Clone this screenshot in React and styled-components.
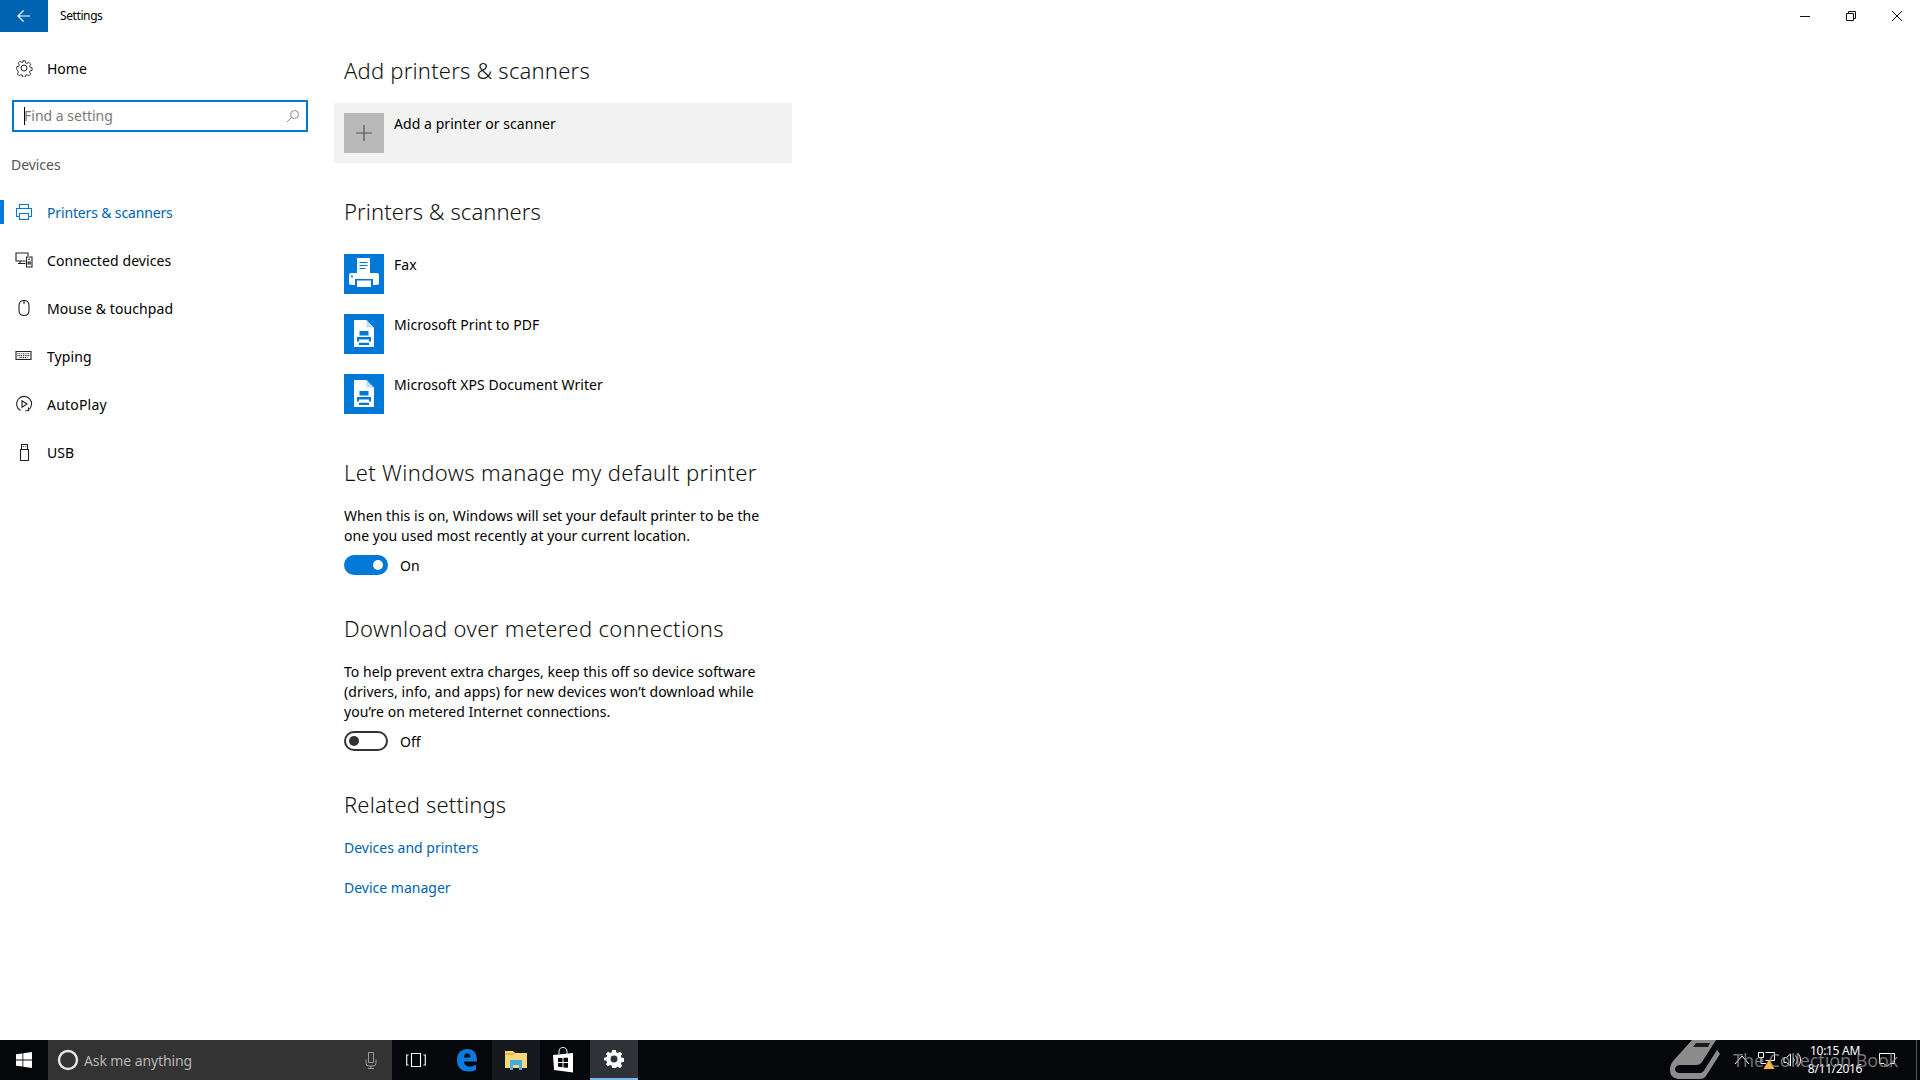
import React from "react";
import styled, { createGlobalStyle } from "styled-components";

const GlobalStyle = createGlobalStyle`
  html, body {
    margin: 0;
    padding: 0;
    height: 100%;
    background: #fff;
    overflow: hidden;
  }
  body {
    font-family: "Noto Sans", "Open Sans", sans-serif;
    color: #000;
  }
  * { box-sizing: border-box; }
`;

const navItems = [
  { label: "Printers & scanners", icon: <PrinterIcon />, active: true, track: -0.15 },
  { label: "Connected devices", icon: <DevicesIcon />, track: 0.1 },
  { label: "Mouse & touchpad", icon: <MouseIcon />, track: 0.1 },
  { label: "Typing", icon: <KeyboardIcon />, track: 0.1 },
  { label: "AutoPlay", icon: <AutoPlayIcon />, track: 0.2 },
  { label: "USB", icon: <UsbIcon />, track: 0 },
];

function PrinterIcon() {
  return (
    <svg width="18" height="18" viewBox="0 0 18 18" fill="none" stroke="currentColor" strokeWidth="1.1">
      <path d="M4.5 5.5V1.5h9v4M4.5 13.5H1.5v-8h15v8h-3M4.5 10.5h9v6h-9z" />
    </svg>
  );
}

function DevicesIcon() {
  return (
    <svg width="18" height="18" viewBox="0 0 18 18" fill="none" stroke="currentColor" strokeWidth="1.1">
      <path d="M10.5 10H1V2h12v3M5 10v2.500h5.500M3 12.500h4" />
      <path d="M11.500 6h5.500v10h-5.500z" />
      <path d="M13.200 8.300h2M13.200 11h2v2h-2z" />
    </svg>
  );
}

function MouseIcon() {
  return (
    <svg width="18" height="18" viewBox="0 0 18 18" fill="none" stroke="currentColor" strokeWidth="1.1">
      <path d="M4 6.500C4 3 6 1.500 9 1.500S14 3 14 6.500v5c0 3.500-2 5-5 5s-5-1.500-5-5z" />
      <path d="M9 1.500V5" />
    </svg>
  );
}

function KeyboardIcon() {
  return (
    <svg width="18" height="18" viewBox="0 0 18 18" fill="none" stroke="currentColor" strokeWidth="1.100">
      <path d="M1 4.500h15v8H1z" />
      <path d="M2.500 6.800h12M2.500 8.600h12M4.500 10.600h8" strokeDasharray="1 0.800" />
    </svg>
  );
}

function AutoPlayIcon() {
  return (
    <svg width="18" height="18" viewBox="0 0 18 18" fill="none" stroke="currentColor" strokeWidth="1.100">
      <path d="M5.500 15.500A7.500 7.500 0 1 1 13 15.300" />
      <path d="M13.500 12.500v3.300h-3.300" />
      <path d="M7 5.800l5 3.200-5 3.200z" />
    </svg>
  );
}

function UsbIcon() {
  return (
    <svg width="18" height="18" viewBox="0 0 18 18" fill="none" stroke="currentColor" strokeWidth="1.100">
      <path d="M5.500 6.500h8v11h-8zM6.500 6.500V1.500h6v5" />
      <path d="M8 3.500h.8M10.300 3.500h.8" />
    </svg>
  );
}

function FaxGlyph() {
  return (
    <svg width="40" height="40" viewBox="0 0 40 40">
      <path fill="#fff" d="M13 4h13v17H13z" />
      <path stroke="#0078d7" strokeWidth="1" d="M15.500 8.500h8M15.500 11.500h8M15.500 14.500h6" />
      <path fill="#fff" d="M7 19h26a2 2 0 0 1 2 2v8a2 2 0 0 1-2 2H7a2 2 0 0 1-2-2v-8a2 2 0 0 1 2-2z" />
      <path fill="#0078d7" d="M11 25h18v9H11z" />
      <path fill="#fff" d="M13 26.500h14V33H13z" />
      <circle cx="8" cy="22.500" r="1" fill="#0078d7" />
    </svg>
  );
}

function DocPrintGlyph() {
  return (
    <svg width="40" height="40" viewBox="0 0 40 40">
      <path fill="#fff" d="M10 6h12.500l7.500 7.500V33H10z" />
      <path fill="#0078d7" d="M22.500 6l7.500 7.500h-7.500z" opacity="0.25" />
      <path fill="#0078d7" d="M15.500 17h9v4.500h-9zM13 23h14v4.500H13zM15 28.500h10V31H15z" />
      <path fill="#fff" d="M15 25.500h10v3H15z" />
    </svg>
  );
}

function BackArrow() {
  return (
    <svg width="14" height="14" viewBox="0 0 14 14" fill="none" stroke="#fff" strokeWidth="1.200">
      <path d="M13 7H1M6.500 1.500L1 7l5.500 5.500" />
    </svg>
  );
}

function GearOutline() {
  return (
    <svg width="18" height="18" viewBox="0 0 18 18" fill="none" stroke="#222" strokeWidth="1">
      <circle cx="9" cy="9" r="3" />
      <path d="M7.500 1h3l.4 2.300 1.500.7 2-1.300 2.100 2.100-1.300 2 .7 1.500 2.100.4v3l-2.100.4-.7 1.500 1.300 2-2.100 2.100-2-1.300-1.500.7-.4 2.100h-3l-.4-2.100-1.500-.7-2 1.300-2.100-2.100 1.300-2-.7-1.500L1 10.500v-3l2.100-.4.7-1.500-1.300-2 2.100-2.100 2 1.300 1.500-.7z" transform="translate(0.900 0.900) scale(0.9)" />
    </svg>
  );
}

function SearchGlyph() {
  return (
    <svg width="14" height="14" viewBox="0 0 14 14" fill="none" stroke="#8a8a8a" strokeWidth="1">
      <circle cx="8.500" cy="5.500" r="4" />
      <path d="M5.500 8.500L1 13" />
    </svg>
  );
}

function App() {
  return (
    <>
      <GlobalStyle />
      <Page>
        <TitleBar>
          <BackButton><BackArrow /></BackButton>
          <TitleText>Settings</TitleText>
          <WindowButtons>
            <WindowButton>
              <svg width="12" height="12" viewBox="0 0 12 12" stroke="#111" fill="none"><path d="M1 6.500h10" /></svg>
            </WindowButton>
            <WindowButton>
              <svg width="12" height="12" viewBox="0 0 12 12" stroke="#111" fill="none"><path d="M1.500 3.500h7v7h-7zM3.500 3.500v-2h7v7h-2" /></svg>
            </WindowButton>
            <WindowButton>
              <svg width="12" height="12" viewBox="0 0 12 12" stroke="#111" fill="none"><path d="M1 1l10 10M11 1L1 11" /></svg>
            </WindowButton>
          </WindowButtons>
        </TitleBar>

        <Main>
          <Sidebar>
            <HomeRow>
              <NavIcon><GearOutline /></NavIcon>
              <NavLabel>Home</NavLabel>
            </HomeRow>
            <SearchBox>
              <Caret />
              <SearchPlaceholder>Find a setting</SearchPlaceholder>
              <SearchGlyph />
            </SearchBox>
            <GroupLabel>Devices</GroupLabel>
            <NavList>
              {navItems.map((item) => (
                <NavRow key={item.label} $active={item.active}>
                  <NavIcon>{item.icon}</NavIcon>
                  <NavLabel $track={item.track}>{item.label}</NavLabel>
                </NavRow>
              ))}
            </NavList>
          </Sidebar>

          <Content>
            <Heading $top={22} $track={0.2}>Add printers &amp; scanners</Heading>
            <AddTile>
              <AddSquare>
                <svg width="18" height="18" viewBox="0 0 18 18" stroke="#555" strokeWidth="1.200"><path d="M9 1v16M1 9h16" /></svg>
              </AddSquare>
              <TileText>Add a printer or scanner</TileText>
            </AddTile>

            <Heading $top={32} $track={0.07}>Printers &amp; scanners</Heading>
            <DeviceList>
              <DeviceRow>
                <DeviceSquare><FaxGlyph /></DeviceSquare>
                <TileText>Fax</TileText>
              </DeviceRow>
              <DeviceRow>
                <DeviceSquare><DocPrintGlyph /></DeviceSquare>
                <TileText>Microsoft Print to PDF</TileText>
              </DeviceRow>
              <DeviceRow>
                <DeviceSquare><DocPrintGlyph /></DeviceSquare>
                <TileText>Microsoft XPS Document Writer</TileText>
              </DeviceRow>
            </DeviceList>

            <Heading $top={42} $track={0.36}>Let Windows manage my default printer</Heading>
            <Paragraph>
              When this is on, Windows will set your default printer to be the<br />
              one you used most recently at your current location.
            </Paragraph>
            <ToggleRow>
              <Toggle $on><Knob $on /></Toggle>
              <ToggleText>On</ToggleText>
            </ToggleRow>

            <Heading $top={37} $track={0.37}>Download over metered connections</Heading>
            <Paragraph>
              To help prevent extra charges, keep this off so device software<br />
              (drivers, info, and apps) for new devices won’t download while<br />
              you’re on metered Internet connections.
            </Paragraph>
            <ToggleRow>
              <Toggle><Knob /></Toggle>
              <ToggleText>Off</ToggleText>
            </ToggleRow>

            <Heading $top={37} $track={0.15}>Related settings</Heading>
            <LinkText $top={18}>Devices and printers</LinkText>
            <LinkText $top={20}>Device manager</LinkText>
          </Content>
        </Main>

        <Taskbar>
          <StartButton>
            <svg width="16" height="16" viewBox="0 0 16 16" fill="#fff">
              <path d="M0 2.300l6.500-.9v6.200H0zM7.300 1.300L16 0v7.600H7.300zM0 8.400h6.500v6.200L0 13.700zM7.300 8.400H16V16l-8.700-1.300z" />
            </svg>
          </StartButton>
          <AskBox>
            <svg width="22" height="22" viewBox="0 0 22 22" fill="none" stroke="#e6e6e6" strokeWidth="2.400">
              <circle cx="11" cy="11" r="9" />
            </svg>
            <AskText>Ask me anything</AskText>
            <svg width="14" height="18" viewBox="0 0 14 18" fill="none" stroke="#9a9a9a" strokeWidth="1">
              <path d="M4.500 1.500h5v10h-5zM2 8.500v3.500a3 3 0 0 0 3 3h4a3 3 0 0 0 3-3V8.500M7 15v2.500M4 17.500h6" />
            </svg>
          </AskBox>
          <TaskSlot $width={48}>
            <svg width="20" height="16" viewBox="0 0 20 16" fill="none" stroke="#fff" strokeWidth="1.100">
              <path d="M5.500 1.500h9v13h-9zM2.500 3H.7v10h1.800M17.500 3h1.800v10h-1.800" />
            </svg>
          </TaskSlot>
          <TaskSlot $width={52}>
            <svg width="24" height="24" viewBox="-2 0 24 24">
              <path fill="#0a7be0" d="M1 12C1 5 5 1 11.500 1 18 1 21 5.500 21 13.500H8c.3 3.400 2.700 5 5.700 5 2.500 0 4.800-.7 6.300-1.800v5c-2 1.200-4.600 1.800-7.300 1.800C5 23.500 1 19 1 12zM8 9.500h6.500c0-2.700-1.200-4.300-3.200-4.300-2 0-3 1.700-3.300 4.300z" />
            </svg>
          </TaskSlot>
          <TaskSlot $width={48} $tone="#15181c">
            <svg width="22" height="20" viewBox="0 0 22 20">
              <path fill="#f6d87c" d="M0 1h8l2 2h12v15H0z" />
              <path fill="#e8b93f" d="M0 3h9v2H0z" />
              <path fill="#4aa8e0" d="M5 10h12v10h-3v-5H8v5H5z" />
            </svg>
          </TaskSlot>
          <TaskSlot $width={50}>
            <svg width="24" height="26" viewBox="1 0 24 26">
              <path fill="none" stroke="#ddd" strokeWidth="1.100" d="M7 7V4.500a4 4 0 0 1 8 0V7" />
              <path fill="#fff" d="M1 8l20-2v19.500L2 23z" />
              <path fill="#05070b" d="M6 11h4.500v4H6zM11.500 10.700H16v4.300h-4.500zM6 16h4.500v4.200L6 19.800zM11.500 16H16v4.800l-4.500-.4z" />
            </svg>
          </TaskSlot>
          <TaskSlot $width={48} $tone="#2f3236" $running>
            <svg width="20" height="20" viewBox="-1 -1 22 22">
              <path fill="#fff" fillRule="evenodd" d="M8 0h4l.5 2.700 1.700.7 2.300-1.500 2.600 2.600-1.600 2.300.8 1.700 2.700.5v4l-2.700.5-.8 1.700 1.600 2.300-2.600 2.600-2.300-1.500-1.700.7L12 20H8l-.5-2.700-1.700-.7-2.300 1.500L.9 16l1.600-2.300-.8-1.700L-1 11.500v-3l2.700-.5.800-1.700L.9 4.500l2.600-2.600 2.300 1.500 1.700-.7zM10 6.200a3.800 3.800 0 1 0 0 7.600 3.800 3.800 0 0 0 0-7.600z" />
            </svg>
          </TaskSlot>

          <Tray>
            <TrayGlyph $width={24}>
              <svg width="16" height="10" viewBox="0 0 16 10" fill="none" stroke="#fff"><path d="M1 9l7-8 7 8" /></svg>
            </TrayGlyph>
            <TrayGlyph $width={26}>
              <svg width="18" height="18" viewBox="0 0 18 18">
                <path fill="none" stroke="#fff" d="M.5 1.500h5v5h-5zM7.500 1.500h9v8h-9M3 6.500v6h5" />
                <path fill="#f6b73c" d="M11 8.500l5.500 9.500H5.500z" />
              </svg>
            </TrayGlyph>
            <TrayGlyph $width={24}>
              <svg width="18" height="16" viewBox="0 0 18 16" fill="none" stroke="#fff">
                <path d="M1 5.500h2.500L7.500 2v12l-4-3.500H1zM10 5.500a3.500 3.500 0 0 1 0 5M12.500 3.500a6.500 6.500 0 0 1 0 9M15 1.500a9.500 9.500 0 0 1 0 13" />
              </svg>
            </TrayGlyph>
            <Clock>
              <span>10:15 AM</span>
              <span>8/11/2016</span>
            </Clock>
            <TrayGlyph $width={42}>
              <svg width="16" height="16" viewBox="0 0 16 16" fill="none" stroke="#fff">
                <path d="M.5 1.500h15v10h-4.500l-3 3-3-3H.5z" />
              </svg>
            </TrayGlyph>
            <ShowDesktop />
          </Tray>

          <Watermark>
            <svg width="52" height="40" viewBox="0 0 52 40">
              <path fill="#8c8c8c" d="M22 0H46L32 22Q30 25 26 25H10Q6 25 5 29Q5 32 9 33H30Q33 33 35 29L47 10L50 14L36 36Q34 39 30 39H8Q0 38 0 30Q0 24 4 20Z" />
              <path fill="#1d1d1d" d="M26 3H40L38 7H23Z" />
            </svg>
            <WatermarkText>The Collection Book</WatermarkText>
          </Watermark>
        </Taskbar>
      </Page>
    </>
  );
}

const Page = styled.div`
  width: 1920px;
  height: 1080px;
  display: flex;
  flex-direction: column;
  background: #fff;
`;
const TitleBar = styled.div`
  height: 32px;
  flex: none;
  display: flex;
  align-items: center;
`;
const BackButton = styled.div`
  width: 48px;
  height: 32px;
  background: #0063b1;
  display: flex;
  align-items: center;
  justify-content: center;
`;
const TitleText = styled.span`
  margin-left: 12px;
  margin-top: -1px;
  font-size: 12px;
  letter-spacing: -0.4px;
`;
const WindowButtons = styled.div`
  margin-left: auto;
  display: flex;
`;
const WindowButton = styled.div`
  width: 46px;
  height: 32px;
  display: flex;
  align-items: center;
  justify-content: center;
`;
const Main = styled.div`
  flex: 1;
  display: flex;
  min-height: 0;
`;
const Sidebar = styled.nav`
  width: 334px;
  flex: none;
  padding-top: 16px;
`;
const NavIcon = styled.span`
  width: 18px;
  height: 18px;
  margin-left: 15px;
  margin-right: 14px;
  display: flex;
  flex: none;
`;
const NavLabel = styled.span`
  font-size: 14px;
  letter-spacing: ${(p) => p.$track || 0}px;
`;
const HomeRow = styled.div`
  height: 40px;
  display: flex;
  align-items: center;
`;
const SearchBox = styled.div`
  position: relative;
  width: 296px;
  height: 32px;
  margin: 12px 0 0 12px;
  border: 2px solid #0078d7;
  display: flex;
  align-items: center;
  padding: 0 6px 0 10px;
`;
const Caret = styled.span`
  position: absolute;
  left: 10px;
  top: 5px;
  width: 1px;
  height: 18px;
  background: #000;
`;
const SearchPlaceholder = styled.span`
  flex: 1;
  margin-top: -2px;
  font-size: 14px;
  color: #7a7a7a;
`;
const GroupLabel = styled.div`
  height: 24px;
  margin: 21px 0 0 11px;
  font-size: 14px;
  line-height: 24px;
  letter-spacing: -0.05px;
  color: #555;
`;
const NavList = styled.div`
  margin-top: 11px;
  display: flex;
  flex-direction: column;
`;
const NavRow = styled.div`
  position: relative;
  height: 48px;
  display: flex;
  align-items: center;
  color: ${(p) => (p.$active ? "#0063b1" : "#000")};

  ${NavIcon} {
    color: ${(p) => (p.$active ? "#0078d7" : "#222")};
  }

  &::before {
    content: "";
    display: ${(p) => (p.$active ? "block" : "none")};
    position: absolute;
    left: 0;
    top: 12px;
    width: 4px;
    height: 24px;
    background: #0078d7;
  }
`;
const Content = styled.main`
  flex: 1;
  padding-left: 10px;
`;
const Heading = styled.h2`
  margin: ${(p) => p.$top}px 0 0 0;
  height: 32px;
  font-size: 22px;
  line-height: 32px;
  font-weight: 300;
  letter-spacing: ${(p) => p.$track}px;
  color: #111;
`;
const AddTile = styled.div`
  width: 458px;
  height: 60px;
  margin: 17px 0 0 -10px;
  padding: 10px;
  background: #f2f2f2;
  display: flex;
  gap: 10px;
`;
const AddSquare = styled.div`
  width: 40px;
  height: 40px;
  background: #b9b9b9;
  display: flex;
  align-items: center;
  justify-content: center;
`;
const TileText = styled.span`
  font-size: 14px;
  line-height: 22px;
  letter-spacing: 0.06px;
`;
const DeviceList = styled.div`
  margin-top: 27px;
  display: flex;
  flex-direction: column;
  gap: 20px;
`;
const DeviceRow = styled.div`
  height: 40px;
  display: flex;
  gap: 10px;
`;
const DeviceSquare = styled.div`
  width: 40px;
  height: 40px;
  background: #0078d7;
  display: flex;
  align-items: center;
  justify-content: center;
`;
const Paragraph = styled.p`
  margin: 18px 0 0 0;
  font-size: 14px;
  line-height: 20px;
  letter-spacing: 0.05px;
`;
const ToggleRow = styled.div`
  margin-top: 9px;
  height: 20px;
  display: flex;
  align-items: center;
  gap: 12px;
`;
const Toggle = styled.div`
  width: 44px;
  height: 20px;
  border-radius: 10px;
  border: 2px solid ${(p) => (p.$on ? "#0078d7" : "#333")};
  background: ${(p) => (p.$on ? "#0078d7" : "#fff")};
  display: flex;
  align-items: center;
  justify-content: ${(p) => (p.$on ? "flex-end" : "flex-start")};
  padding: 0 3px;
`;
const Knob = styled.span`
  width: 10px;
  height: 10px;
  border-radius: 50%;
  background: ${(p) => (p.$on ? "#fff" : "#333")};
`;
const ToggleText = styled.span`
  font-size: 14px;
`;
const LinkText = styled.div`
  margin-top: ${(p) => p.$top}px;
  height: 20px;
  font-size: 14px;
  line-height: 20px;
  color: #0063b1;
`;
const Taskbar = styled.footer`
  position: relative;
  height: 40px;
  flex: none;
  background: #05070b;
  display: flex;
  align-items: stretch;
`;
const StartButton = styled.div`
  width: 48px;
  display: flex;
  align-items: center;
  justify-content: center;
`;
const AskBox = styled.div`
  width: 344px;
  background: #333;
  display: flex;
  align-items: center;
  padding: 0 14px 0 9px;
  gap: 5px;
`;
const AskText = styled.span`
  flex: 1;
  font-size: 14px;
  color: #b5b5b5;
  letter-spacing: -0.1px;
`;
const TaskSlot = styled.div`
  width: ${(p) => p.$width}px;
  background: ${(p) => p.$tone || "transparent"};
  border-bottom: ${(p) => (p.$running ? "2px solid #76b9ed" : "none")};
  display: flex;
  align-items: center;
  justify-content: center;
`;
const Tray = styled.div`
  margin-left: auto;
  display: flex;
  align-items: center;
`;
const TrayGlyph = styled.div`
  width: ${(p) => p.$width}px;
  display: flex;
  justify-content: center;
`;
const Clock = styled.div`
  width: 62px;
  display: flex;
  flex-direction: column;
  align-items: center;
  font-size: 12px;
  line-height: 18px;
  letter-spacing: -0.3px;
  white-space: nowrap;
  color: #fff;
`;
const ShowDesktop = styled.div`
  width: 12px;
  height: 40px;
  padding-left: 8px;

  &::before {
    content: "";
    display: block;
    width: 1px;
    height: 40px;
    background: #555;
  }
`;
const Watermark = styled.div`
  position: absolute;
  left: 1670px;
  top: 0;
  height: 40px;
  display: flex;
  align-items: center;
  gap: 11px;
  pointer-events: none;
`;
const WatermarkText = styled.span`
  font-size: 18px;
  letter-spacing: -0.1px;
  color: rgba(150, 150, 150, 0.75);
  white-space: nowrap;
`;

export default App;
